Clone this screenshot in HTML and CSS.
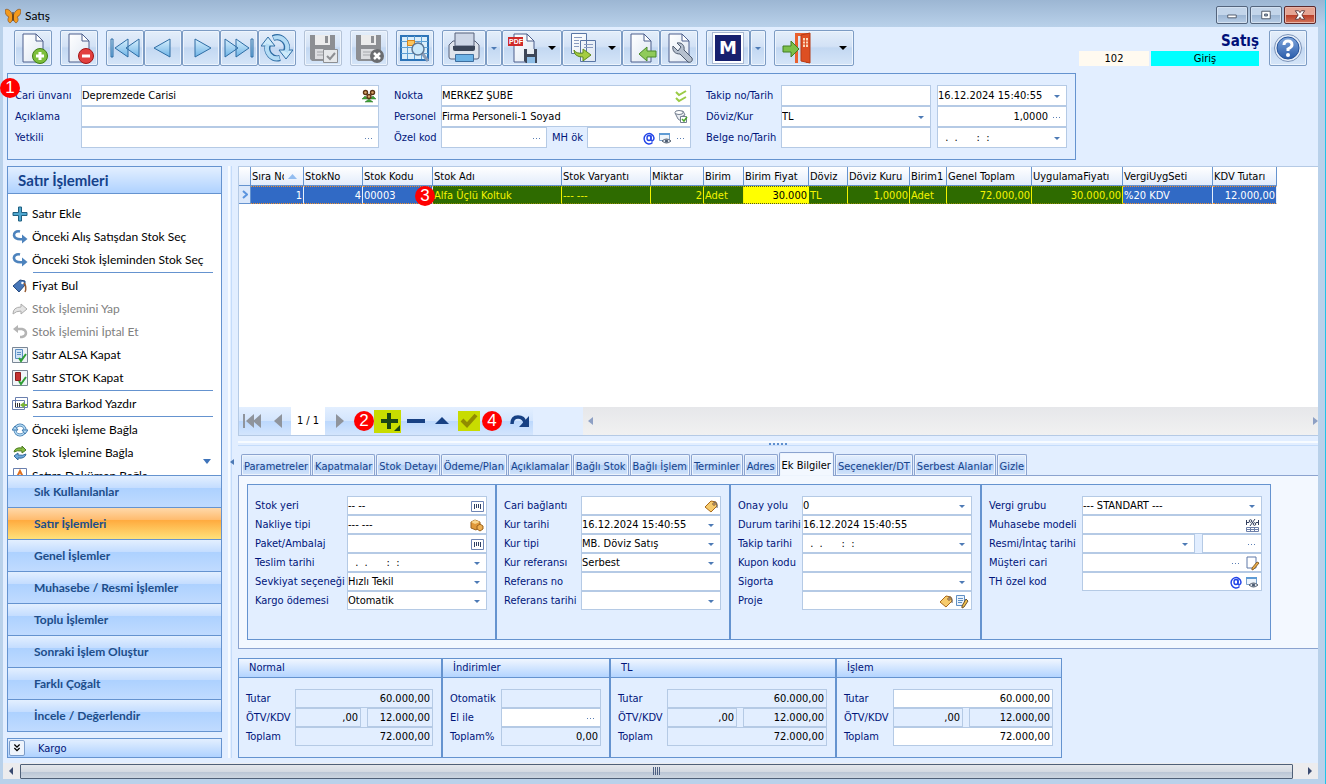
FILE: index.html
```html
<!DOCTYPE html>
<html lang="tr">
<head>
    <meta charset="UTF-8">
    <meta name="viewport" content="width=device-width, initial-scale=1.0">
    <title>Satış</title>
    <link rel="stylesheet" href="styles.css">
</head>
<body>
    <!-- Shared icons -->
    <svg class="defs" aria-hidden="true">
        <defs>
            <linearGradient id="blueGrad" x1="0" y1="0" x2="0" y2="1">
                <stop offset="0" stop-color="#d9f0fd"/><stop offset="1" stop-color="#6db3e6"/>
            </linearGradient>
            <linearGradient id="pageGrad" x1="0" y1="0" x2="1" y2="1">
                <stop offset="0" stop-color="#ffffff"/><stop offset="1" stop-color="#dde6f2"/>
            </linearGradient>
            <linearGradient id="helpGrad" x1="0" y1="0" x2="0" y2="1">
                <stop offset="0" stop-color="#7fa6dc"/><stop offset="1" stop-color="#2a5caa"/>
            </linearGradient>
            <symbol id="page" viewBox="0 0 32 32">
                <path d="M6 2h13l7 7v21H6z" fill="url(#pageGrad)" stroke="#4d5f8c"/>
                <path d="M19 2v7h7z" fill="#fff" stroke="#4d5f8c"/>
            </symbol>
            <symbol id="floppy" viewBox="0 0 32 32">
                <path d="M3 3h25v26H5l-2-2z" fill="#8d8f93"/>
                <path d="M8 3h15v10H8z" fill="#ececec"/><path d="M18 4h3v7h-3z" fill="#8d8f93"/>
                <path d="M8 17h16v10H8z" fill="#dcdde0"/><path d="M10 20h12M10 23h12" stroke="#a5a7ab"/>
            </symbol>
            <symbol id="dots" viewBox="0 0 16 16">
                <path d="M4 8h1v1H4zM7 8h1v1H7zM10 8h1v1h-1z" fill="#5b7fb5"/>
            </symbol>
            <symbol id="caret" viewBox="0 0 16 16">
                <path d="M5 7h6L8 10z" fill="#4d7ab5"/>
            </symbol>
            <symbol id="barcode" viewBox="0 0 16 16">
                <path d="M2.500 3.500h12v10h-12z" fill="#fff" stroke="#6e85b5"/>
                <path d="M5.500 6v5M7.500 6v4M9.500 6v4M11.500 6v5" stroke="#2f3f63"/>
            </symbol>
            <symbol id="at" viewBox="0 0 16 16">
                <path d="M11.500 12.500A5 5.200 0 1 1 13 8c0 3-3 4-3 1.500V5.500" fill="none" stroke="#2244e8" stroke-width="1.500"/>
                <ellipse cx="8" cy="8" rx="2" ry="2.500" fill="none" stroke="#2244e8" stroke-width="1.400"/>
            </symbol>
            <symbol id="eye" viewBox="0 0 16 16">
                <path d="M2.500 3.500h10v7h-10z" fill="#eef5fc" stroke="#7ba3cc"/><path d="M2 3h11v2H2z" fill="#5e9bd4"/>
                <path d="M5 11q4.500-4 9 0q-4.500 4-9 0z" fill="#dfe6ee" stroke="#56616f"/><circle cx="9.500" cy="11" r="1.600" fill="#4a5a70"/>
            </symbol>
            <symbol id="tag" viewBox="0 0 16 16">
                <path d="M2 9l6-6 5 1 1 4-6 6z" fill="#f7cb6c" stroke="#a9691a"/>
                <circle cx="11" cy="6" r="1.200" fill="#fff" stroke="#7b4a12"/><path d="M11 4q4 0 3 6" fill="none" stroke="#63656b"/>
            </symbol>
            <symbol id="boxes" viewBox="0 0 16 16">
                <path d="M2 5l4-2 5 2v5l-4 3-5-2z" fill="#e0993a" stroke="#99611c"/><path d="M2 5l4 2 5-2-5-2z" fill="#f9d58b"/>
                <path d="M8 9l3-2 3 2v3l-3 2-3-2z" fill="#eeaf51" stroke="#99611c"/>
            </symbol>
            <symbol id="note" viewBox="0 0 16 16">
                <path d="M3 2h9v11H3z" fill="#fff" stroke="#5f79a8"/>
                <path d="M8 13l5-6 2 1-5 6-2 1z" fill="#f0b14a" stroke="#87602b"/>
            </symbol>
            <symbol id="notelines" viewBox="0 0 16 16">
                <path d="M2.500 2.500h8v10h-8z" fill="#eaf3fc" stroke="#5f8fc4"/><path d="M4 5.500h5M4 7.500h5M4 9.500h4" stroke="#5f8fc4"/>
                <path d="M8 13l4-7 2 2-4 6-2 1z" fill="#f0c14a" stroke="#6d5330"/>
            </symbol>
            <symbol id="percent" viewBox="0 0 16 16">
                <path d="M2.500 3v5M14.500 3v5M3 5.500h2M12 5.500h2M11 2L6 9" stroke="#333f5e"/>
                <circle cx="6.500" cy="4" r="1.300" fill="none" stroke="#333f5e"/><circle cx="10.500" cy="7" r="1.300" fill="none" stroke="#333f5e"/>
                <path d="M2.500 10.500h12v4h-12zM2.500 12.500h12M6.500 10.500v4M10.500 10.500v4" fill="#fff" stroke="#6d7fa8"/>
            </symbol>
            <symbol id="back" viewBox="0 0 16 16">
                <path d="M8 2.500C4 1.500 1.500 4 2 6.500S5 11 12 10" fill="none" stroke="#4d83bd" stroke-width="2.600"/>
                <path d="M10 5.500l5.500 4.500-5.500 4.500z" fill="#4d83bd"/>
            </symbol>
        </defs>
    </svg>

    <header class="titlebar">
        <svg class="app-icon" viewBox="0 0 16 16">
            <path d="M8 8C6 2 2 0 0 2c0 3 1 6 4 7-2 2-1 5 1 6 2-1 3-4 3-7zM8 8c2-6 6-8 8-6 0 3-1 6-4 7 2 2 1 5-1 6-2-1-3-4-3-7z" fill="#f39a1e" stroke="#7d4310" stroke-width=".6"/>
            <path d="M8 4v9" stroke="#3b2208"/>
        </svg>
        <h1>Satış</h1>
        <div class="window-buttons">
            <button type="button" aria-label="Küçült"><svg viewBox="0 0 30 17"><path d="M10.500 8.500h9v3h-9z" fill="#fff" stroke="#4c5566"/></svg></button>
            <button type="button" aria-label="Büyüt"><svg viewBox="0 0 30 17"><path d="M10.500 4.500h9v8h-9z" fill="#fff" stroke="#4c5566"/><path d="M13.500 7.500h3v2h-3z" fill="#9db6d2" stroke="#4c5566"/></svg></button>
            <button type="button" class="close" aria-label="Kapat"><svg viewBox="0 0 30 17"><path d="M10 4h3.500l1.500 2 1.500-2H20l-3 4.500 3 4.500h-3.500L15 11l-1.500 2H10l3-4.500z" fill="#fff" stroke="#5c3a3d"/></svg></button>
        </div>
    </header>

    <div class="client">
        <div class="toolbar">
            <button type="button" class="tool" aria-label="Yeni">
                <svg viewBox="0 0 32 32"><use href="#page"/><circle cx="23" cy="24" r="7.500" fill="#7dbf3c" stroke="#3f7d16"/><path d="M23 20v8M19 24h8" stroke="#fff" stroke-width="3"/></svg>
            </button>
            <button type="button" class="tool" aria-label="Sil">
                <svg viewBox="0 0 32 32"><use href="#page"/><circle cx="23" cy="24" r="7.500" fill="#e2403f" stroke="#a31414"/><path d="M19 24h8" stroke="#fff" stroke-width="3"/></svg>
            </button>
            <div class="tool-group">
                <button type="button" class="tool" aria-label="İlk"><svg viewBox="0 0 32 32"><g fill="url(#blueGrad)" stroke="#2e6da4"><path d="M2 7h2v18H2zM17 16L30 7v18zM6 16l13-9v18z"/></g></svg></button>
                <button type="button" class="tool" aria-label="Önceki"><svg viewBox="0 0 32 32"><path d="M7 16l16-9v18z" fill="url(#blueGrad)" stroke="#2e6da4"/></svg></button>
                <button type="button" class="tool" aria-label="Sonraki"><svg viewBox="0 0 32 32"><path d="M26 16L10 7v18z" fill="url(#blueGrad)" stroke="#2e6da4"/></svg></button>
                <button type="button" class="tool" aria-label="Son"><svg viewBox="0 0 32 32"><g fill="url(#blueGrad)" stroke="#2e6da4"><path d="M28 7h2v18h-2zM15 16L2 7v18zM26 16L13 7v18z"/></g></svg></button>
                <button type="button" class="tool" aria-label="Yenile">
                    <svg viewBox="0 0 32 32">
                        <g fill="none" stroke="#2e6da4" stroke-width="6"><path d="M7 13a10 10 0 0 0 12 13"/><path d="M12 6a10 10 0 0 1 13 13"/></g>
                        <path d="M0 14l7-9 7 9zM32 18l-7 9-7-9z" fill="#cdeafa" stroke="#2e6da4"/>
                        <g fill="none" stroke="#b4dcf5" stroke-width="4"><path d="M7 12a10 10 0 0 0 11.500 14"/><path d="M12.500 6A10 10 0 0 1 25 20"/></g>
                    </svg>
                </button>
            </div>
            <button type="button" class="tool" aria-label="Kaydet" disabled>
                <svg viewBox="0 0 32 32"><use href="#floppy"/><path d="M16.500 17.500h14v13h-14z" fill="#e6e8ea" stroke="#8d8f93"/><path d="M20 24l3 3 5-6" fill="none" stroke="#8d8f93" stroke-width="2"/></svg>
            </button>
            <button type="button" class="tool" aria-label="Vazgeç" disabled>
                <svg viewBox="0 0 32 32"><use href="#floppy"/><circle cx="24" cy="24" r="7" fill="#6b6d70"/><path d="M21 21l6 6M27 21l-6 6" stroke="#fff" stroke-width="2.500"/></svg>
            </button>
            <button type="button" class="tool" aria-label="Listele">
                <svg viewBox="0 0 32 32"><path d="M2 4h27v24H2z" fill="#dbeefa" stroke="#2d74b8" stroke-width="2"/><path d="M2 9.500h27M2 15.500h27M2 21.500h27M8.500 4v23M15.500 4v23M22.500 4v23" stroke="#5e9fd3"/><path d="M8.500 8.500h7v5h-7z" fill="#fbc55c" stroke="#d9861b"/><path d="M23 21l6 8" stroke="#8a9bb5" stroke-width="3"/><circle cx="19" cy="17" r="6" fill="#c9e8fb" stroke="#5c7694" stroke-width="1.500"/></svg>
            </button>
            <div class="tool-group">
                <button type="button" class="tool print" aria-label="Yazdır">
                    <svg viewBox="0 0 32 32"><path d="M1 13l4-4h22l4 4v12q0 2-2 2H3q-2 0-2-2z" fill="#dfe4ec" stroke="#56617a"/><path d="M7 1h19v13H7z" fill="#cdd6e6" stroke="#56617a"/><path d="M5 14h22v3q0 2-2 2H7q-2 0-2-2z" fill="#3a4558"/><path d="M7.500 22.500h18v7h-18z" fill="#6db3e6" stroke="#3f6f9f"/></svg>
                </button>
                <button type="button" class="tool drop" aria-label="Yazdırma seçenekleri"><svg viewBox="0 0 16 16"><use href="#caret"/></svg></button>
                <button type="button" class="tool wide" aria-label="PDF kaydet">
                    <svg viewBox="0 0 32 32"><use href="#page"/><path d="M0 5h15v9H0z" fill="#cf2a2a"/><text x="1" y="12" class="pdf">PDF</text><path d="M16 17h13v14H18l-2-2z" fill="#3d4657"/><path d="M19 17h7v5h-7z" fill="#e8ecf2"/><path d="M19 25h8v6h-8z" fill="#8dbde6"/></svg>
                    <svg class="black-caret" viewBox="0 0 8 4"><path d="M0 0h8L4 4z"/></svg>
                </button>
                <button type="button" class="tool wide" aria-label="Kopyala">
                    <svg viewBox="0 0 32 32"><path d="M3.500 1.500h15v20h-15zM12.500 8.500h15v21h-15z" fill="url(#pageGrad)" stroke="#5a76a5"/><path d="M6 5.500h8M6 8.500h5M6 11.500h5M6 14.500h5M16 12.500h9M16 15.500h9" stroke="#8a9cc0"/><path d="M6 18q2 4 9 3v-4l8 6-8 6v-4q-9 0-9-7z" fill="#a4cc3f" stroke="#5d8a1c"/></svg>
                    <svg class="black-caret" viewBox="0 0 8 4"><path d="M0 0h8L4 4z"/></svg>
                </button>
                <button type="button" class="tool" aria-label="İçeri al">
                    <svg viewBox="0 0 32 32"><use href="#page"/><path d="M14 22l8-7v4h9v6h-9v4z" fill="#8fcb5a" stroke="#4b8a2a"/></svg>
                </button>
                <button type="button" class="tool" aria-label="Ayarlar">
                    <svg viewBox="0 0 32 32"><use href="#page"/><path d="M10 14c-1 5 2 8 7 8l8 8c3 1 5-1 4-4l-8-8c1-5-3-8-7-7l4 4-3 4z" fill="#b7c1cf" stroke="#4c596d"/></svg>
                </button>
            </div>
            <div class="tool-group">
                <button type="button" class="tool print" aria-label="M"><span class="m-logo">M</span></button>
                <button type="button" class="tool drop" aria-label="M seçenekleri"><svg viewBox="0 0 16 16"><use href="#caret"/></svg></button>
            </div>
            <button type="button" class="tool exit" aria-label="Çıkış">
                <svg viewBox="0 0 32 32"><path d="M14 1h14v30h-3V4h-8v27h-3z" fill="#e8602f"/><path d="M20 3l9-2v30l-9-2z" fill="#dd4f22" stroke="#b53a14"/><path d="M22 6h5v9h-5z" fill="#fbd9b8"/><path d="M24.500 6v9M22 9h5M22 12h5" stroke="#dd4f22"/><path d="M2 14h8V9l8 8-8 8v-5H2z" fill="#7cc04a" stroke="#437f22"/></svg>
                <svg class="black-caret" viewBox="0 0 8 4"><path d="M0 0h8L4 4z"/></svg>
            </button>
            <div class="doc-info">
                <strong>Satış</strong>
                <div class="doc-tags"><span class="doc-no">102</span><span class="doc-type">Giriş</span></div>
            </div>
            <button type="button" class="tool help" aria-label="Yardım">
                <svg viewBox="0 0 32 32"><circle cx="16" cy="16" r="13.500" fill="#e5edf8" stroke="#7b93b8"/><circle cx="16" cy="16" r="11" fill="url(#helpGrad)" stroke="#27559c"/><path d="M12 13q0-4 4-4t4 4q0 2-4 4v2" fill="none" stroke="#fff" stroke-width="3"/><circle cx="16" cy="23" r="2" fill="#fff"/></svg>
            </button>
        </div>

        <!-- Document header -->
        <form class="panel doc-header">
            <span class="badge badge-1">1</span>
            <div class="form-grid col-a">
                <label for="cari">Cari ünvanı</label>
                <div class="field"><input id="cari" value="Depremzede Carisi">
                    <svg viewBox="0 0 16 16"><path d="M1 11l3-3 3 3zM9 11l3-3 3 3zM4 14l4-3 4 3z" fill="#3fa53a" stroke="#2a6e27" stroke-width=".5"/><g fill="#d9a468" stroke="#5b3415" stroke-width="1.400"><circle cx="4.500" cy="4.500" r="2"/><circle cx="11.500" cy="4.500" r="2"/><circle cx="8" cy="8.500" r="2"/></g></svg>
                </div>
                <label for="aciklama">Açıklama</label>
                <div class="field"><input id="aciklama"></div>
                <label for="yetkili">Yetkili</label>
                <div class="field"><input id="yetkili"><svg><use href="#dots"/></svg></div>
            </div>
            <div class="form-grid col-b">
                <label for="nokta">Nokta</label>
                <div class="field"><input id="nokta" value="MERKEZ ŞUBE"><svg viewBox="0 0 16 16"><path d="M3 4l3 3 7-4M3 10l3 3 7-4" fill="none" stroke="#9acb45" stroke-width="2"/></svg></div>
                <label for="personel">Personel</label>
                <div class="field"><input id="personel" value="Firma Personeli-1 Soyad"><svg viewBox="0 0 16 16"><path d="M2 4l3 6 3 2V8l4-2-2-4z" fill="#e8ebf0" stroke="#747f90"/><ellipse cx="6" cy="3.500" rx="4" ry="2" fill="#fff" stroke="#747f90"/><path d="M7.500 7.500h6v6h-6z" fill="#fff" stroke="#747f90"/><path d="M9 10l2 2 3-4" fill="none" stroke="#4ca82a" stroke-width="1.500"/></svg></div>
                <label for="ozel">Özel kod</label>
                <div class="split">
                    <div class="field"><input id="ozel"><svg><use href="#dots"/></svg></div>
                    <label for="mhok">MH ök</label>
                    <div class="field"><input id="mhok"><svg><use href="#at"/></svg><svg><use href="#eye"/></svg><svg><use href="#dots"/></svg></div>
                </div>
            </div>
            <div class="form-grid col-c">
                <label for="takip">Takip no/Tarih</label>
                <div class="split pair">
                    <div class="field"><input id="takip"></div>
                    <div class="field"><input aria-label="Tarih" value="16.12.2024 15:40:55"><svg><use href="#caret"/></svg></div>
                </div>
                <label for="doviz">Döviz/Kur</label>
                <div class="split pair">
                    <div class="field"><select id="doviz"><option>TL</option></select><svg><use href="#caret"/></svg></div>
                    <div class="field num"><input aria-label="Kur" value="1,0000"><svg><use href="#dots"/></svg></div>
                </div>
                <label for="belge">Belge no/Tarih</label>
                <div class="split pair">
                    <div class="field"><input id="belge"></div>
                    <div class="field"><input class="mask" aria-label="Belge tarihi" value=" .  .      :  :"><svg><use href="#caret"/></svg></div>
                </div>
            </div>
        </form>

        <div class="main">
            <aside class="sidebar">
                <nav class="nav-pane">
                    <h2>Satır İşlemleri</h2>
                    <ul class="actions">
                        <li><button type="button"><svg viewBox="0 0 16 16"><path d="M6.500 1h3v5.500H15v3H9.500V15h-3V9.500H1v-3h5.500z" fill="#4fa7cf" stroke="#1f5f80"/></svg>Satır Ekle</button></li>
                        <li><button type="button"><svg><use href="#back"/></svg>Önceki Alış Satışdan Stok Seç</button></li>
                        <li><button type="button"><svg><use href="#back"/></svg>Önceki Stok İşleminden Stok Seç</button></li>
                        <li class="group"><button type="button"><svg viewBox="0 0 16 16"><path d="M1 8l7-6 5 1v4l-6 7z" fill="#4676b8" stroke="#254a80"/><circle cx="10.500" cy="5" r="1.300" fill="#fff"/><path d="M12 5q3 4 1 9" fill="none" stroke="#965a32" stroke-width="1.500"/></svg>Fiyat Bul</button></li>
                        <li><button type="button" disabled><svg viewBox="0 0 16 16"><path d="M1 13q0-7 8-7V3l6 5-6 5v-3q-5 0-8 3z" fill="#e3e3e3" stroke="#acacac"/></svg>Stok İşlemini Yap</button></li>
                        <li><button type="button" disabled><svg viewBox="0 0 16 16"><path d="M4 5h6q4 1 4 4t-4 4H8" fill="none" stroke="#b4b4b4" stroke-width="2.500"/><path d="M1 5l5-4v8z" fill="#b4b4b4"/></svg>Stok İşlemini İptal Et</button></li>
                        <li><button type="button"><svg viewBox="0 0 16 16"><path d="M.5.5h15v15H.5z" fill="#f0f4f8" stroke="#7a8796"/><path d="M3.500 2.500h7v9h-7z" fill="#cfe2f5" stroke="#5c8fc4"/><path d="M5 5.500h4M5 7.500h4" stroke="#5c8fc4"/><path d="M7 11l2 3 5-7" fill="none" stroke="#2f9e35" stroke-width="2"/></svg>Satır ALSA Kapat</button></li>
                        <li><button type="button"><svg viewBox="0 0 16 16"><path d="M.5.5h15v15H.5z" fill="#f0f4f8" stroke="#7a8796"/><path d="M3.500 2.500h5v8h-5z" fill="#c53232" stroke="#8b1d1d"/><path d="M7 11l2 3 5-7" fill="none" stroke="#2f9e35" stroke-width="2"/></svg>Satır STOK Kapat</button></li>
                        <li class="group"><button type="button"><svg viewBox="0 0 16 16"><path d="M3.500 1.500h12v10h-12zM.5 4.500h12v9H.5z" fill="#fff" stroke="#6a7fae"/><path d="M3.500 7v4M5.500 7v4M7.500 7v4" stroke="#333"/><path d="M8 9l4-3v2h3v2h-3v2z" fill="#7db63a"/></svg>Satıra Barkod Yazdır</button></li>
                        <li class="group"><button type="button"><svg viewBox="0 0 16 16"><circle cx="8" cy="8" r="5" fill="none" stroke="#3f78ad" stroke-width="3"/><circle cx="8" cy="8" r="5" fill="none" stroke="#b5dcf5" stroke-width="1.500"/><path d="M0 8l3-4 3 4zM10 8h6l-3 4z" fill="#b5dcf5" stroke="#3f78ad"/></svg>Önceki İşleme Bağla</button></li>
                        <li><button type="button"><svg viewBox="0 0 16 16"><path d="M2 7q1-5 8-4V1l4 4-4 3V6Q5 5 2 7z" fill="#84ba42" stroke="#4b7a20"/><path d="M14 9q-1 5-8 4v2l-4-4 4-3v2q5 1 8-1z" fill="#6ea9db" stroke="#356a9c"/></svg>Stok İşlemine Bağla</button></li>
                        <li><button type="button"><svg viewBox="0 0 16 16"><path d="M1.500.5h13v15h-13z" fill="#fff" stroke="#6a7fae"/><path d="M4 11l4-8 4 8M6 8h4" fill="none" stroke="#e0701e" stroke-width="2"/></svg>Satıra Doküman Bağla</button></li>
                    </ul>
                    <svg class="more" viewBox="0 0 8 5"><path d="M0 0h8L4 5z" fill="#3f74ba"/></svg>
                    <div class="sections">
                        <button type="button">Sık Kullanılanlar</button>
                        <button type="button" class="active">Satır İşlemleri</button>
                        <button type="button">Genel İşlemler</button>
                        <button type="button">Muhasebe / Resmi İşlemler</button>
                        <button type="button">Toplu İşlemler</button>
                        <button type="button">Sonraki İşlem Oluştur</button>
                        <button type="button">Farklı Çoğalt</button>
                        <button type="button">İncele / Değerlendir</button>
                    </div>
                </nav>
                <button type="button" class="kargo"><span><svg viewBox="0 0 16 16"><path d="M5 4l3 3 3-3M5 8l3 3 3-3" fill="none" stroke="#000" stroke-width="1.500"/></svg></span>Kargo</button>
            </aside>
            <div class="splitter"><svg viewBox="0 0 4 6"><path d="M4 0v6L0 3z" fill="#4d7ab5"/></svg></div>

            <div class="content">
                <section class="grid-box">
                    <table>
                        <thead>
                            <tr>
                                <th class="w-ind"></th>
                                <th class="w-sira"><span>Sıra No</span><svg viewBox="0 0 9 5"><path d="M0 5h9L4.500 0z" fill="#93bdf0"/></svg></th>
                                <th class="w-no">StokNo</th>
                                <th class="w-kod">Stok Kodu</th>
                                <th class="w-ad">Stok Adı</th>
                                <th class="w-var">Stok Varyantı</th>
                                <th class="w-mik">Miktar</th>
                                <th class="w-birim">Birim</th>
                                <th class="w-fiyat">Birim Fiyat</th>
                                <th class="w-dov">Döviz</th>
                                <th class="w-kur">Döviz Kuru</th>
                                <th class="w-b1">Birim1</th>
                                <th class="w-top">Genel Toplam</th>
                                <th class="w-uyg">UygulamaFiyatı</th>
                                <th class="w-vergi">VergiUygSeti</th>
                                <th class="w-kdv">KDV Tutarı</th>
                            </tr>
                        </thead>
                        <tbody>
                            <tr>
                                <td class="ind"><svg viewBox="0 0 6 9"><path d="M1 1l4 3.500L1 8" fill="none" stroke="#5b94de" stroke-width="2"/></svg></td>
                                <td class="right">1</td>
                                <td class="right">4</td>
                                <td>00003</td>
                                <td class="mark"><span class="badge badge-3">3</span>Alfa Üçlü Koltuk</td>
                                <td class="mark">--- ---</td>
                                <td class="mark right">2</td>
                                <td class="mark">Adet</td>
                                <td class="edit right">30.000</td>
                                <td class="mark">TL</td>
                                <td class="mark right">1,0000</td>
                                <td class="mark">Adet</td>
                                <td class="mark right">72.000,00</td>
                                <td class="mark right">30.000,00</td>
                                <td>%20 KDV</td>
                                <td class="right">12.000,00</td>
                            </tr>
                        </tbody>
                    </table>
                    <div class="grid-foot">
                        <div class="navigator">
                            <button type="button" class="n-first" aria-label="İlk kayıt"><svg viewBox="0 0 20 16"><path d="M1 1h2v14H1zM4 8l8-7v14zM11 8l8-7v14z" fill="#8f949c"/></svg></button>
                            <button type="button" class="n-prev" aria-label="Önceki kayıt"><svg viewBox="0 0 10 16"><path d="M1 8l8-7v14z" fill="#8f949c"/></svg></button>
                            <span class="n-pos">1 / 1</span>
                            <button type="button" class="n-next" aria-label="Sonraki kayıt"><svg viewBox="0 0 10 16"><path d="M9 8L1 1v14z" fill="#8f949c"/></svg></button>
                            <span class="badge">2</span>
                            <button type="button" class="n-add" aria-label="Ekle"><svg viewBox="0 0 26 22"><path d="M12 3h4v6h7v4h-7v6h-4v-6H6V9h6z" fill="#1b4414"/><path d="M25 15v6h-6z" fill="#1b4414"/></svg></button>
                            <button type="button" class="n-del" aria-label="Çıkar"><svg viewBox="0 0 18 16"><path d="M0 6h18v4H0z" fill="#174184"/></svg></button>
                            <button type="button" class="n-up" aria-label="Düzenle"><svg viewBox="0 0 14 16"><path d="M0 11l7-7 7 7z" fill="#174184"/></svg></button>
                            <button type="button" class="n-ok" aria-label="Onayla"><svg viewBox="0 0 22 20"><path d="M4 9l5 5L18 4" fill="none" stroke="#918c00" stroke-width="4"/></svg></button>
                            <span class="badge">4</span>
                            <button type="button" class="n-redo" aria-label="Yenile"><svg viewBox="0 0 20 16"><path d="M2 11Q2 4 8 4t7 6" fill="none" stroke="#174184" stroke-width="3.500"/><path d="M19 3v11H9z" fill="#174184"/></svg></button>
                        </div>
                        <div class="grid-scroll"><svg viewBox="0 0 5 8"><path d="M5 0v8L0 4z" fill="#8ea0c4"/></svg><svg viewBox="0 0 5 8"><path d="M0 0v8l5-4z" fill="#8ea0c4"/></svg></div>
                    </div>
                </section>

                <div class="h-splitter"><i></i><i></i><i></i><i></i><i></i></div>

                <div class="tabs" role="tablist">
                    <button type="button" role="tab">Parametreler</button>
                    <button type="button" role="tab">Kapatmalar</button>
                    <button type="button" role="tab">Stok Detayı</button>
                    <button type="button" role="tab">Ödeme/Plan</button>
                    <button type="button" role="tab">Açıklamalar</button>
                    <button type="button" role="tab">Bağlı Stok</button>
                    <button type="button" role="tab">Bağlı İşlem</button>
                    <button type="button" role="tab">Terminler</button>
                    <button type="button" role="tab">Adres</button>
                    <button type="button" role="tab" class="active" aria-selected="true">Ek Bilgiler</button>
                    <button type="button" role="tab">Seçenekler/DT</button>
                    <button type="button" role="tab">Serbest Alanlar</button>
                    <button type="button" role="tab">Gizle</button>
                </div>

                <div class="tab-page">
                    <form class="detail">
                        <div class="form-grid small d-a">
                            <label for="stokyeri">Stok yeri</label>
                            <div class="field"><input id="stokyeri" value="-- --"><svg><use href="#barcode"/></svg></div>
                            <label for="nakliye">Nakliye tipi</label>
                            <div class="field"><input id="nakliye" value="--- ---"><svg><use href="#boxes"/></svg></div>
                            <label for="paket">Paket/Ambalaj</label>
                            <div class="field"><input id="paket"><svg><use href="#barcode"/></svg></div>
                            <label for="teslim">Teslim tarihi</label>
                            <div class="field"><input id="teslim" class="mask" value=" .  .      :  :"><svg><use href="#caret"/></svg></div>
                            <label for="sevk">Sevkiyat seçeneği</label>
                            <div class="field"><select id="sevk"><option>Hızlı Tekil</option></select><svg><use href="#caret"/></svg></div>
                            <label for="kargo">Kargo ödemesi</label>
                            <div class="field"><select id="kargo"><option>Otomatik</option></select><svg><use href="#caret"/></svg></div>
                        </div>
                        <div class="form-grid small d-b">
                            <label for="baglanti">Cari bağlantı</label>
                            <div class="field"><input id="baglanti"><svg><use href="#tag"/></svg></div>
                            <label for="kurtarih">Kur tarihi</label>
                            <div class="field"><input id="kurtarih" value="16.12.2024 15:40:55"><svg><use href="#caret"/></svg></div>
                            <label for="kurtipi">Kur tipi</label>
                            <div class="field"><select id="kurtipi"><option>MB. Döviz Satış</option></select><svg><use href="#caret"/></svg></div>
                            <label for="kurref">Kur referansı</label>
                            <div class="field"><select id="kurref"><option>Serbest</option></select><svg><use href="#caret"/></svg></div>
                            <label for="refno">Referans no</label>
                            <div class="field"><input id="refno"></div>
                            <label for="reftarih">Referans tarihi</label>
                            <div class="field"><input id="reftarih"><svg><use href="#caret"/></svg></div>
                        </div>
                        <div class="form-grid small d-c">
                            <label for="onay">Onay yolu</label>
                            <div class="field"><select id="onay"><option>0</option></select><svg><use href="#caret"/></svg></div>
                            <label for="durum">Durum tarihi</label>
                            <div class="field"><input id="durum" value="16.12.2024 15:40:55"></div>
                            <label for="takiptarih">Takip tarihi</label>
                            <div class="field"><input id="takiptarih" class="mask" value=" .  .      :  :"><svg><use href="#caret"/></svg></div>
                            <label for="kupon">Kupon kodu</label>
                            <div class="field"><input id="kupon"></div>
                            <label for="sigorta">Sigorta</label>
                            <div class="field"><select id="sigorta"><option></option></select><svg><use href="#caret"/></svg></div>
                            <label for="proje">Proje</label>
                            <div class="field"><input id="proje"><svg><use href="#tag"/></svg><svg><use href="#notelines"/></svg></div>
                        </div>
                        <div class="form-grid small d-d">
                            <label for="vergi">Vergi grubu</label>
                            <div class="field"><select id="vergi"><option>--- STANDART ---</option></select><svg><use href="#caret"/></svg></div>
                            <label for="muhasebe">Muhasebe modeli</label>
                            <div class="field"><input id="muhasebe"><svg><use href="#percent"/></svg></div>
                            <label for="resmi">Resmi/İntaç tarihi</label>
                            <div class="split resmi">
                                <div class="field"><input id="resmi"><svg><use href="#caret"/></svg></div>
                                <div class="field"><input aria-label="İntaç tarihi"><svg><use href="#dots"/></svg></div>
                            </div>
                            <label for="musteri">Müşteri cari</label>
                            <div class="field"><input id="musteri"><svg><use href="#dots"/></svg><svg><use href="#note"/></svg></div>
                            <label for="thkod">TH özel kod</label>
                            <div class="field"><input id="thkod"><svg><use href="#at"/></svg><svg><use href="#eye"/></svg></div>
                        </div>
                    </form>
                </div>

                <!-- Totals -->
                <form class="totals">
                    <fieldset class="t-normal">
                        <h3>Normal</h3>
                        <div class="form-grid small">
                            <label for="n1">Tutar</label><div class="field num ro"><input id="n1" value="60.000,00" readonly></div>
                            <label for="n2">ÖTV/KDV</label><div class="split half"><div class="field num ro"><input id="n2" value=",00" readonly></div><div class="field num ro"><input aria-label="KDV" value="12.000,00" readonly></div></div>
                            <label for="n3">Toplam</label><div class="field num ro"><input id="n3" value="72.000,00" readonly></div>
                        </div>
                    </fieldset>
                    <fieldset class="t-ind">
                        <h3>İndirimler</h3>
                        <div class="form-grid small">
                            <label for="i1">Otomatik</label><div class="field num ro"><input id="i1" readonly></div>
                            <label for="i2">El ile</label><div class="field num"><input id="i2"><svg><use href="#dots"/></svg></div>
                            <label for="i3">Toplam%</label><div class="field num ro"><input id="i3" value="0,00" readonly></div>
                        </div>
                    </fieldset>
                    <fieldset class="t-tl">
                        <h3>TL</h3>
                        <div class="form-grid small">
                            <label for="t1">Tutar</label><div class="field num ro"><input id="t1" value="60.000,00" readonly></div>
                            <label for="t2">ÖTV/KDV</label><div class="split part"><div class="field num ro"><input id="t2" value=",00" readonly></div><div class="field num ro"><input aria-label="KDV" value="12.000,00" readonly></div></div>
                            <label for="t3">Toplam</label><div class="field num ro"><input id="t3" value="72.000,00" readonly></div>
                        </div>
                    </fieldset>
                    <fieldset class="t-tl">
                        <h3>İşlem</h3>
                        <div class="form-grid small">
                            <label for="s1">Tutar</label><div class="field num"><input id="s1" value="60.000,00"></div>
                            <label for="s2">ÖTV/KDV</label><div class="split part"><div class="field num ro"><input id="s2" value=",00" readonly></div><div class="field num ro"><input aria-label="KDV" value="12.000,00" readonly></div></div>
                            <label for="s3">Toplam</label><div class="field num"><input id="s3" value="72.000,00"></div>
                        </div>
                    </fieldset>
                </form>
            </div>
        </div>

        <div class="page-scroll">
            <svg viewBox="0 0 17 16"><path d="M10 4v8L6 8z" fill="#3a4a70"/></svg>
            <div class="thumb"><svg viewBox="0 0 8 8"><path d="M.5 0v8M2.500 0v8M4.500 0v8M6.500 0v8" stroke="#4d5f82"/></svg></div>
            <svg viewBox="0 0 17 16"><path d="M7 4v8l4-4z" fill="#3a4a70"/></svg>
        </div>
    </div>
</body>
</html>
```
FILE: styles.css
```css
:root {
    --ui: Tahoma, "DejaVu Sans Condensed", "Noto Sans", sans-serif;
    --segoe: "Segoe UI", Lato, "Noto Sans", sans-serif;
    --bg: #e2eeff;
    --line: #6593cf;
    --field: #b5cae5;
    --label: #00157a;
}

* {
    margin: 0;
    padding: 0;
    box-sizing: border-box;
}

body {
    height: 100vh;
    display: flex;
    flex-direction: column;
    background: #b9d1ea;
    border-right: 1px solid #1fc4e8;
    font-family: var(--ui);
    font-size: 11px;
    color: #000;
    overflow: hidden;
}

button,
input,
select {
    font: inherit;
    color: inherit;
    border: none;
    background: none;
    border-radius: 0;
}

svg {
    display: block;
    flex: none;
}

.defs {
    position: absolute;
    width: 0;
    height: 0;
}

/* Title bar */
.titlebar {
    flex: none;
    height: 27px;
    padding: 0 9px 0 5px;
    display: flex;
    align-items: center;
    gap: 4px;
    background: linear-gradient(#9cb6d3, #b9d1ea);
}

.titlebar h1 {
    flex: 1;
    padding-top: 4px;
    font: 12px var(--segoe);
}

.app-icon {
    width: 16px;
    height: 16px;
    margin-top: 4px;
}

.window-buttons {
    display: flex;
    gap: 2px;
    padding-top: 3px;
}

.window-buttons button {
    width: 32px;
    height: 18px;
    border: 1px solid #54657d;
    border-radius: 2px;
    background: linear-gradient(#c3d5ea 50%, #9bb5d3 50%, #b7cde6);
    box-shadow: inset 0 0 0 1px #d3e1f1;
}

.window-buttons svg {
    width: 30px;
    height: 16px;
}

.window-buttons .close {
    border-color: #5d2a2d;
    background: linear-gradient(#e5a493 50%, #b93c26 50%, #d2745b);
    box-shadow: inset 0 0 0 1px #e9b5a8;
}

.client {
    flex: 1;
    min-height: 0;
    margin: 0 7px 5px 3px;
    display: flex;
    flex-direction: column;
    background: var(--bg);
}

/* Toolbar */
.toolbar {
    flex: none;
    display: flex;
    align-items: flex-start;
    gap: 8px;
    padding: 3px 11px 7px;
}

.tool-group {
    display: flex;
}

.tool {
    width: 38px;
    height: 36px;
    display: flex;
    align-items: center;
    justify-content: center;
    border: 1px solid #7d9cc4;
    border-radius: 2px;
    background: linear-gradient(#e4eefa, #d3e2f6 45%, #c3d8f2 50%, #d5e5f8);
    box-shadow: inset 0 0 0 1px #edf4fd;
}

.tool svg {
    width: 32px;
    height: 32px;
}

.tool:disabled {
    border-color: #b4c3d8;
}

.tool.print {
    width: 44px;
}

.tool.drop {
    width: 16px;
}

.tool.drop svg {
    width: 16px;
    height: 16px;
}

.tool.wide {
    width: 60px;
    gap: 8px;
}

.tool.exit {
    width: 80px;
    gap: 26px;
}

.tool .black-caret {
    width: 8px;
    height: 4px;
}

.pdf {
    font: bold 7px "Liberation Sans", sans-serif;
    fill: #fff;
}

.m-logo {
    width: 30px;
    height: 30px;
    border: 2px solid #fff;
    outline: 1px solid #a9b9d3;
    background: #17206e;
    color: #fff;
    font: bold 18px/26px "DejaVu Sans", sans-serif;
}

.doc-info {
    margin-left: auto;
    margin-right: 2px;
    text-align: right;
}

.doc-info strong {
    display: block;
    height: 21px;
    color: #001078;
    font: bold 15px/22px var(--ui);
}

.doc-tags {
    display: flex;
    gap: 2px;
    line-height: 15px;
    text-align: center;
}

.doc-no {
    width: 70px;
    background: #fffaf0;
}

.doc-type {
    width: 108px;
    background: #00ffff;
}

/* Panels and form rows */
.panel {
    border: 1px solid var(--line);
}

.form-grid {
    display: grid;
    grid-auto-rows: 21px;
    align-content: start;
}

.form-grid.small {
    grid-auto-rows: 19px;
}

.form-grid label {
    align-self: center;
    color: var(--label);
    white-space: nowrap;
}

.field {
    display: flex;
    align-items: center;
    min-width: 0;
    height: 100%;
    padding-right: 1px;
    border: 1px solid var(--field);
    background: #fff;
}

.field input,
.field select {
    flex: 1;
    min-width: 0;
    width: 0;
    height: 100%;
    padding-right: 1px;
    appearance: none;
    outline: none;
}

.field svg {
    width: 16px;
    height: 16px;
}

.field.num input {
    text-align: right;
}

.field.ro {
    background: var(--bg);
}

.field .mask {
    white-space: pre;
    padding-left: 4px;
}

.split {
    display: grid;
}

.doc-header {
    flex: none;
    align-self: flex-start;
    position: relative;
    margin-left: 4px;
    padding: 11px 8px 11px 7px;
    display: flex;
    gap: 15px;
}

.col-a {
    grid-template-columns: 66px 298px;
}

.col-b {
    grid-template-columns: 47px 250px;
}

.col-c {
    grid-template-columns: 75px 286px;
}

.col-b .split {
    grid-template-columns: 106px 40px 104px;
}

.col-b .split label {
    padding-left: 5px;
}

.split.pair {
    grid-template-columns: 150px 130px;
    gap: 6px;
}

.badge {
    flex: none;
    width: 20px;
    height: 20px;
    border-radius: 50%;
    background: #ff0000;
    color: #fff;
    font: 17px/20px "Liberation Sans", sans-serif;
    text-align: center;
}

.badge-1 {
    position: absolute;
    left: -8px;
    top: 4px;
}

/* Sidebar */
.main {
    flex: 1;
    min-height: 0;
    display: flex;
    padding: 6px 0 5px 4px;
}

.sidebar {
    flex: none;
    width: 215px;
    display: flex;
    flex-direction: column;
    gap: 6px;
}

.nav-pane {
    flex: 1;
    min-height: 0;
    position: relative;
    display: flex;
    flex-direction: column;
    border: 1px solid var(--line);
    background: #fff;
}

.nav-pane h2 {
    flex: none;
    height: 27px;
    padding-left: 10px;
    border-bottom: 1px solid var(--line);
    background: linear-gradient(#e3efff, #afd2ff);
    color: #15428b;
    font: bold 15px/26px var(--segoe);
}

.actions {
    flex: 1;
    min-height: 0;
    overflow: hidden;
    padding: 8px 8px 0 4px;
    list-style: none;
    font: 12px var(--segoe);
}

.actions button {
    width: 100%;
    height: 23px;
    display: flex;
    align-items: center;
    gap: 4px;
    white-space: nowrap;
}

.actions button:disabled {
    color: #808080;
}

.actions svg {
    width: 16px;
    height: 16px;
}

.actions .group {
    padding-top: 3px;
    background: linear-gradient(var(--line), var(--line)) 21px 1px / 100% 1px no-repeat;
}

.more {
    position: absolute;
    right: 10px;
    bottom: 267px;
    width: 8px;
    height: 5px;
}

.sections {
    flex: none;
}

.sections button {
    display: block;
    width: 100%;
    height: 32px;
    padding: 0 26px;
    border-top: 1px solid var(--line);
    background: linear-gradient(#e3efff, #c4ddff 38%, #add1ff 40%, #c0dbff);
    color: #204d89;
    font: bold 12px var(--segoe);
    text-align: left;
    white-space: nowrap;
}

.sections .active {
    background: linear-gradient(#ffd9aa, #ffbb6e 38%, #ffab3f 40%, #fee17a);
}

.kargo {
    flex: none;
    height: 20px;
    display: flex;
    align-items: center;
    gap: 13px;
    padding-left: 1px;
    border: 1px solid var(--line);
    background: linear-gradient(#e3efff, #afd2ff);
    color: var(--label);
}

.kargo span {
    border: 1px solid #7c9cc8;
    border-radius: 2px;
    background: #eef4fc;
}

.kargo svg {
    width: 14px;
    height: 14px;
}

.splitter {
    flex: none;
    width: 4px;
    margin: 0 6px;
    display: flex;
    align-items: center;
    border-left: 2px solid #f7fbff;
    border-right: 1px solid #c5dcfa;
}

.splitter svg {
    width: 4px;
    height: 6px;
}

/* Grid */
.content {
    flex: 1;
    min-width: 0;
    display: flex;
    flex-direction: column;
}

.grid-box {
    flex: 1;
    min-height: 0;
    display: flex;
    flex-direction: column;
    justify-content: space-between;
    border: 1px solid var(--field);
    border-right: none;
    background: #fff;
}

table {
    width: 1038px;
    table-layout: fixed;
    border-collapse: separate;
    border-spacing: 0;
}

th {
    height: 19px;
    padding: 0 1px;
    border-right: 1px solid var(--line);
    border-bottom: 1px solid var(--line);
    background: linear-gradient(#fff, #e2ecfb);
    font-weight: normal;
    text-align: left;
    white-space: nowrap;
    overflow: hidden;
}

.w-ind { width: 12px; }
.w-sira { width: 53px; }
.w-no { width: 59px; }
.w-kod { width: 70px; }
.w-ad { width: 129px; }
.w-var { width: 89px; }
.w-mik { width: 53px; }
.w-birim { width: 40px; }
.w-fiyat { width: 65px; }
.w-dov { width: 39px; }
.w-kur { width: 62px; }
.w-b1 { width: 37px; }
.w-top { width: 85px; }
.w-uyg { width: 91px; }
.w-vergi { width: 90px; }
.w-kdv { width: 64px; }

.w-sira span {
    display: inline-block;
    width: 32px;
    overflow: hidden;
    vertical-align: middle;
}

.w-sira svg {
    display: inline-block;
    width: 9px;
    height: 5px;
    margin-left: 4px;
}

td {
    position: relative;
    height: 18px;
    padding: 0 1px;
    border-right: 1px solid #e6effb;
    border-top: 1px dotted #f0902e;
    border-bottom: 1px dotted #f0902e;
    background: #316ac5;
    color: #fff;
    white-space: nowrap;
}

td.right {
    text-align: right;
}

td.mark {
    border-color: #8a8a00;
    border-right-color: #f2f200;
    background: #2e6b00;
    color: #f5f500;
}

td.edit {
    border-color: #55551a;
    border-right-color: #ffff00;
    background: #ffff00;
    color: #000;
}

td.ind {
    border: solid var(--line);
    border-width: 0 1px 1px 0;
    background: #dbe8fb;
}

td.ind svg {
    width: 6px;
    height: 9px;
    margin-left: 2px;
}

.badge-3 {
    position: absolute;
    left: -18px;
    top: -1px;
}

.grid-foot {
    flex: none;
    height: 28px;
    display: flex;
    background: var(--bg);
}

.navigator {
    display: flex;
    align-items: center;
    width: 344px;
    background: linear-gradient(#e3efff, #d3e5fd 50%, #bcd8fd 50%, #d3e5fd) 0 0 / 294px 100% no-repeat;
}

.navigator button {
    flex: none;
    display: flex;
    justify-content: center;
}

.navigator svg {
    height: 16px;
}

.n-first { width: 26px; }
.n-prev { width: 26px; }
.n-next { width: 29px; }
.n-del { width: 30px; }
.n-up { width: 22px; }
.n-redo { width: 36px; }
.n-first svg, .n-redo svg { width: 20px; }
.n-prev svg, .n-next svg { width: 10px; }
.n-del svg { width: 18px; }
.n-up svg { width: 14px; }

.n-pos {
    width: 34px;
    height: 28px;
    line-height: 28px;
    background: #fff;
    text-align: center;
}

.n-add {
    width: 27px;
    height: 23px;
    align-items: center;
    background: #c8dc00;
}

.n-add svg {
    width: 26px;
    height: 22px;
}

.n-ok {
    width: 22px;
    height: 20px;
    margin: 0 2px 0 5px;
    background: #c8dc00;
}

.n-ok svg {
    width: 22px;
    height: 20px;
}

.grid-scroll {
    flex: 1;
    display: flex;
    align-items: center;
    justify-content: space-between;
    padding-left: 5px;
    background: linear-gradient(#e6e7ea, #f1f1f1);
}

.grid-scroll svg {
    width: 5px;
    height: 8px;
}

.h-splitter {
    flex: none;
    height: 5px;
    margin: 5px 0;
    display: flex;
    justify-content: center;
    align-items: center;
    gap: 2px;
    border-top: 2px solid #f7fbff;
    border-bottom: 1px solid #c5dcfa;
}

.h-splitter i {
    width: 2px;
    height: 2px;
    background: #5f8fce;
}

/* Tabs */
.tabs {
    flex: none;
    display: flex;
    align-items: flex-end;
    gap: 1px;
    padding-left: 3px;
    height: 24px;
}

.tabs button {
    height: 21px;
    padding: 2px 2px 0;
    border: 1px solid #8ba3cf;
    border-bottom: none;
    border-radius: 2px 2px 0 0;
    background: linear-gradient(#e4effd, #cbdffb 50%, #b4d0f6 52%, #d4e5fb);
    box-shadow: inset 0 0 0 1px #edf4fd;
    color: #15428b;
}

.tabs .active {
    position: relative;
    z-index: 1;
    height: 24px;
    margin-bottom: -1px;
    background: #f3f8ff;
    color: #000;
}

.tab-page {
    flex: none;
    padding: 8px;
    border: 1px solid #8ba3cf;
    border-right: none;
    background: #f3f8ff;
}

.detail {
    width: max-content;
    display: flex;
    border: 1px solid var(--line);
    background: var(--bg);
}

.detail .form-grid {
    min-height: 154px;
    padding: 11px 8px 0 7px;
}

.detail .form-grid + .form-grid {
    border-left: 2px solid var(--line);
}

.d-a {
    grid-template-columns: 92px 140px;
}

.d-b {
    grid-template-columns: 77px 140px;
}

.d-c {
    grid-template-columns: 64px 170px;
}

.d-d {
    grid-template-columns: 93px 180px;
}

.resmi {
    grid-template-columns: 113px 60px;
    gap: 7px;
}

/* Totals */
.totals {
    flex: none;
    width: max-content;
    margin-top: 9px;
    display: flex;
    border: solid var(--line);
    border-width: 1px 1px 1px 0;
}

.totals fieldset {
    border: none;
    border-left: 1px solid var(--line);
}

.totals fieldset + fieldset {
    border-left-width: 2px;
}

.totals h3 {
    height: 19px;
    padding-left: 10px;
    border-bottom: 1px solid var(--line);
    background: linear-gradient(#f0f6ff, #b3d4ff);
    color: var(--label);
    font: 11px/18px var(--ui);
}

.totals .form-grid {
    padding: 11px 8px 11px 7px;
}

.t-normal .form-grid {
    grid-template-columns: 49px 138px;
}

.t-ind .form-grid {
    grid-template-columns: 51px 100px;
}

.t-tl .form-grid {
    grid-template-columns: 49px 160px;
}

.half {
    grid-template-columns: 1fr 1fr;
    gap: 6px;
}

.part {
    grid-template-columns: 70px 84px;
    gap: 6px;
}

/* Bottom scrollbar */
.page-scroll {
    flex: none;
    height: 16px;
    display: flex;
    align-items: center;
    background: #ececee;
}

.page-scroll > svg {
    width: 17px;
    height: 16px;
}

.thumb {
    flex: 1;
    height: 15px;
    margin-right: 8px;
    display: flex;
    align-items: center;
    justify-content: center;
    border: 1px solid #4f6078;
    border-radius: 1px;
    background: linear-gradient(#e4e7ec, #d4dae2 50%, #b9c5d5 52%, #ccd5e0);
}

.thumb svg {
    width: 8px;
    height: 8px;
}
```
